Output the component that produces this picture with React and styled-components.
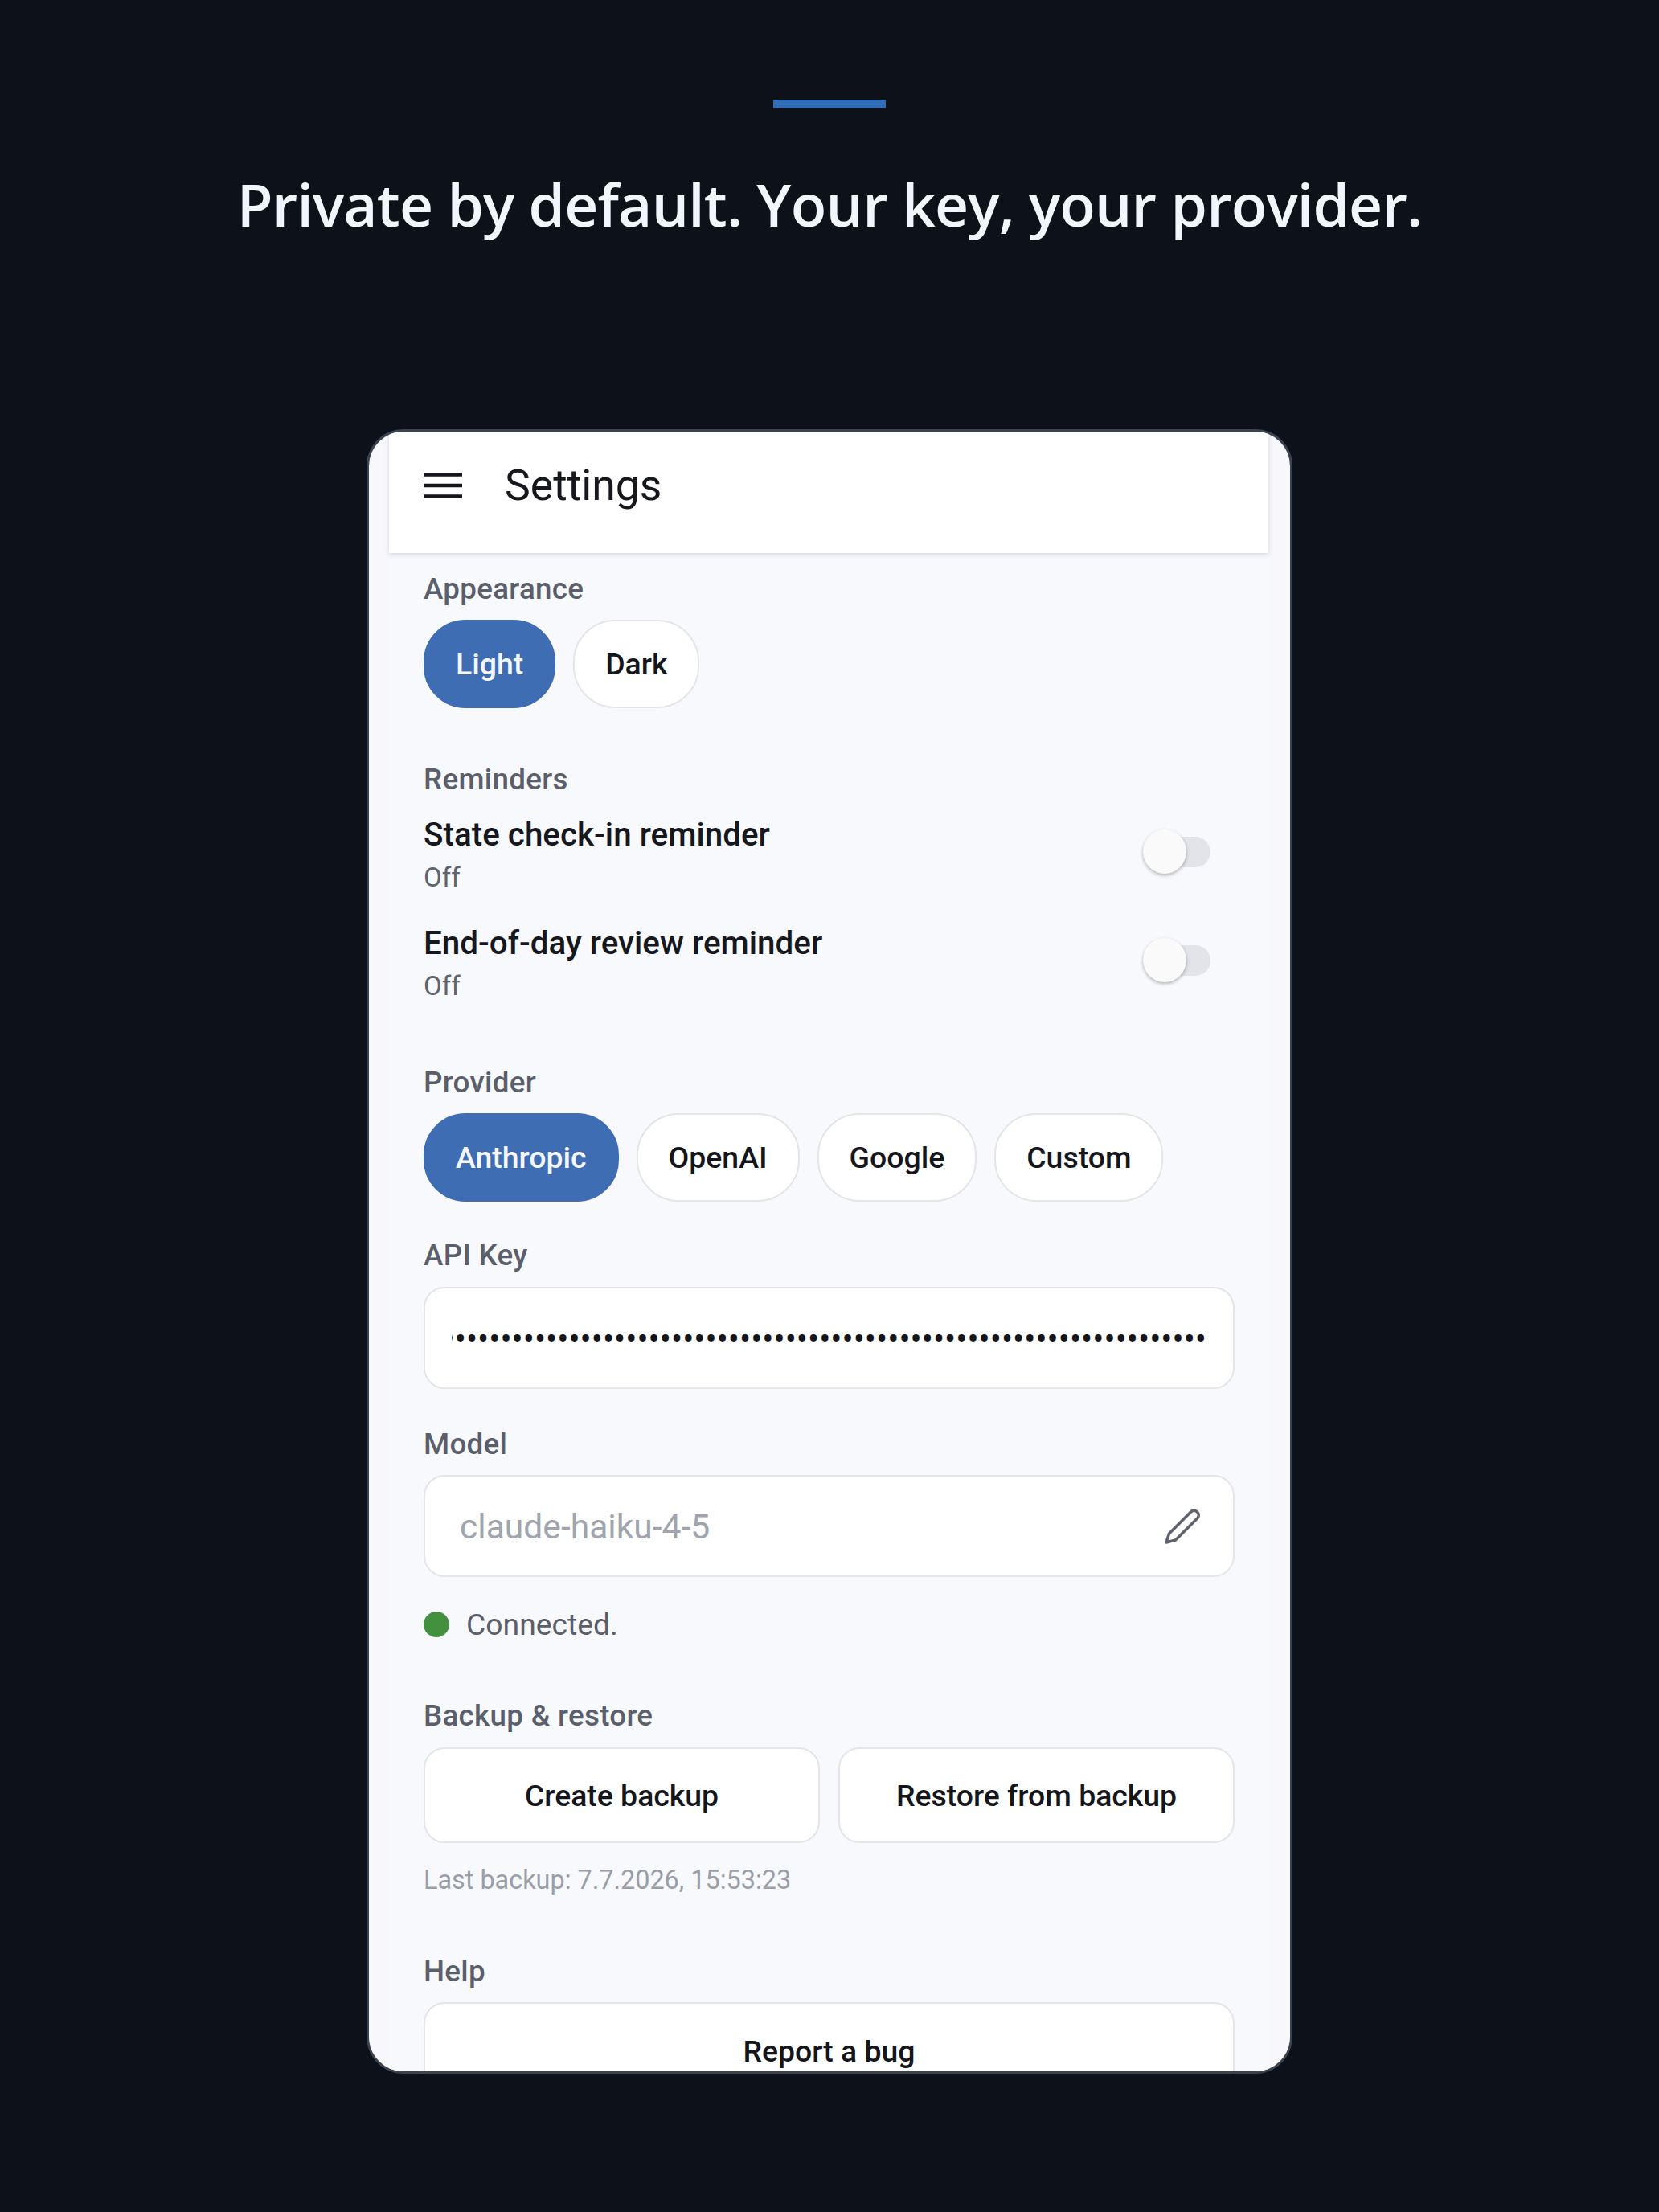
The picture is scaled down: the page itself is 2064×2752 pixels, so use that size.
import React from 'react';
import styled, { createGlobalStyle } from 'styled-components';

const GlobalStyle = createGlobalStyle`
  html, body {
    margin: 0;
    padding: 0;
    background: #0d1119;
  }
  * {
    box-sizing: border-box;
  }
`;

const Page = styled.div`
  width: 2064px;
  height: 2752px;
  background: #0d1119;
  display: flex;
  flex-direction: column;
  align-items: center;
  padding-top: 124px;
  overflow: hidden;
`;
const AccentBar = styled.div`
  width: 140px;
  height: 10px;
  background: #2f6db8;
`;
const Headline = styled.h1`
  margin: 88px 0 0;
  height: 110px;
  font-family: "Open Sans", sans-serif;
  font-weight: 600;
  font-size: 73px;
  line-height: 64px;
  letter-spacing: -0.78px;
  color: #f2f5fc;
  white-space: nowrap;
`;
const Phone = styled.div`
  margin-top: 202px;
  width: 1152px;
  height: 2046px;
  border: 3px solid #3b434f;
  border-radius: 46px;
  background: #f8f8fc;
  overflow: hidden;
  font-family: Roboto, sans-serif;
`;
const Screen = styled.div`
  margin: 0 27px 0 25px;
  background: #f8f9fd;
  height: 100%;
`;
const AppBar = styled.header`
  height: 151px;
  background: #fff;
  box-shadow: 0 2px 6px rgba(40, 44, 60, 0.16);
  display: flex;
  align-items: center;
  padding: 0 0 18px 43px;
  position: relative;
`;
const MenuIcon = styled.svg`
  width: 48px;
  height: 32px;
  color: #14161b;
`;
const AppTitle = styled.div`
  margin-left: 53px;
  font-size: 53.5px;
  color: #16181d;
`;
const Content = styled.div`
  padding: 0 42px 0 43px;
`;
const Label = styled.div`
  margin-top: ${props => props.$top}px;
  font-size: 36.75px;
  line-height: 44px;
  letter-spacing: 0.3px;
  font-weight: 500;
  color: #5b5f6b;
`;
const PillRow = styled.div`
  margin-top: 16px;
  display: flex;
  gap: 22px;
`;
const Pill = styled.div`
  height: 110px;
  padding: 0 38px;
  border-radius: 52px;
  display: flex;
  align-items: center;
  font-size: 37.4px;
  font-weight: 500;
  color: ${props => (props.$active ? '#f4f7fd' : '#14161b')};
  background: ${props => (props.$active ? '#3f6db3' : '#fff')};
  border: 2px solid ${props => (props.$active ? '#3f6db3' : '#e4e5ea')};
`;
const SettingRow = styled.div`
  margin-top: ${props => props.$top}px;
  display: flex;
  justify-content: space-between;
  align-items: center;
  padding-right: 30px;
`;
const SettingTitle = styled.div`
  font-size: 40.4px;
  line-height: 52px;
  font-weight: 500;
  color: #16181d;
`;
const SettingValue = styled.div`
  margin-top: 5px;
  font-size: 33px;
  line-height: 44px;
  color: #5f636e;
`;
const Track = styled.div`
  position: relative;
  width: 84px;
  height: 38px;
  margin-top: -7px;
  border-radius: 19px;
  background: #e3e4e9;
`;
const Thumb = styled.div`
  position: absolute;
  left: 0;
  top: -9px;
  width: 54px;
  height: 55px;
  border-radius: 50%;
  background: #fafafa;
  box-shadow: 0 2px 4px rgba(0, 0, 0, 0.28);
`;
const Field = styled.div`
  margin-top: ${props => props.$top}px;
  height: 127px;
  border-radius: 26px;
  background: #fff;
  border: 2px solid #e4e5ea;
  display: flex;
  align-items: center;
`;
const KeyDots = styled.div`
  flex: 1;
  margin: 0 33px;
  padding-top: 2px;
  display: flex;
  justify-content: flex-end;
  overflow: hidden;
  white-space: nowrap;
  font-size: 42px;
  color: #14161b;
`;
const ModelName = styled.div`
  flex: 1;
  padding-left: 43px;
  font-size: 42.6px;
  color: #a0a4ad;
`;
const EditIcon = styled.svg`
  width: 46px;
  height: 46px;
  margin-right: 40px;
  color: #5f636e;
`;
const Status = styled.div`
  margin-top: 37px;
  display: flex;
  align-items: center;
  gap: 21px;
  font-size: 37.3px;
  line-height: 44px;
  color: #5b5f6b;
`;
const StatusDot = styled.span`
  width: 32px;
  height: 32px;
  border-radius: 50%;
  background: #43913f;
`;
const ButtonRow = styled.div`
  margin-top: 17px;
  display: grid;
  grid-template-columns: 1fr 1fr;
  gap: 23px;
`;
const ActionButton = styled.div`
  height: ${props => props.$height}px;
  margin-top: ${props => props.$top || 0}px;
  border-radius: 26px;
  background: #fff;
  border: 2px solid #e4e5ea;
  display: flex;
  align-items: center;
  justify-content: center;
  font-size: 37.4px;
  font-weight: 500;
  color: #14161b;
`;
const Hint = styled.div`
  margin-top: 26px;
  font-size: 32.4px;
  line-height: 40px;
  color: #9a9ea8;
`;

const Toggle = () => (
  <Track>
    <Thumb />
  </Track>
);

const App = () => (
  <Page>
    <GlobalStyle />
    <AccentBar />
    <Headline>Private by default. Your key, your provider.</Headline>
    <Phone>
      <Screen>
        <AppBar>
          <MenuIcon viewBox="0 0 48 32">
            <path d="M0 2.5h48M0 16h48M0 29.5h48" stroke="currentColor" strokeWidth="4.6" fill="none" />
          </MenuIcon>
          <AppTitle>Settings</AppTitle>
        </AppBar>
        <Content>
          <Label $top={23}>Appearance</Label>
          <PillRow>
            <Pill $active>Light</Pill>
            <Pill>Dark</Pill>
          </PillRow>
          <Label $top={67}>Reminders</Label>
          <SettingRow $top={21}>
            <div>
              <SettingTitle>State check-in reminder</SettingTitle>
              <SettingValue>Off</SettingValue>
            </div>
            <Toggle />
          </SettingRow>
          <SettingRow $top={34}>
            <div>
              <SettingTitle>End-of-day review reminder</SettingTitle>
              <SettingValue>Off</SettingValue>
            </div>
            <Toggle />
          </SettingRow>
          <Label $top={76}>Provider</Label>
          <PillRow>
            <Pill $active>Anthropic</Pill>
            <Pill>OpenAI</Pill>
            <Pill>Google</Pill>
            <Pill>Custom</Pill>
          </PillRow>
          <Label $top={45}>API Key</Label>
          <Field $top={17}>
            <KeyDots>{'•'.repeat(67)}</KeyDots>
          </Field>
          <Label $top={47}>Model</Label>
          <Field $top={16}>
            <ModelName>claude-haiku-4-5</ModelName>
            <EditIcon viewBox="0 0 46 46">
              <path
                d="M3 43 L6.5 32 L34 4.5 a5.7 5.7 0 0 1 8 8 L14.5 40 Z"
                stroke="currentColor"
                strokeWidth="3.6"
                strokeLinejoin="round"
                fill="none"
              />
            </EditIcon>
          </Field>
          <Status>
            <StatusDot />
            Connected.
          </Status>
          <Label $top={70}>Backup &amp; restore</Label>
          <ButtonRow>
            <ActionButton $height={119}>Create backup</ActionButton>
            <ActionButton $height={119}>Restore from backup</ActionButton>
          </ButtonRow>
          <Hint>Last backup: 7.7.2026, 15:53:23</Hint>
          <Label $top={72}>Help</Label>
          <ActionButton $top={16} $height={122}>Report a bug</ActionButton>
        </Content>
      </Screen>
    </Phone>
  </Page>
);

export default App;
